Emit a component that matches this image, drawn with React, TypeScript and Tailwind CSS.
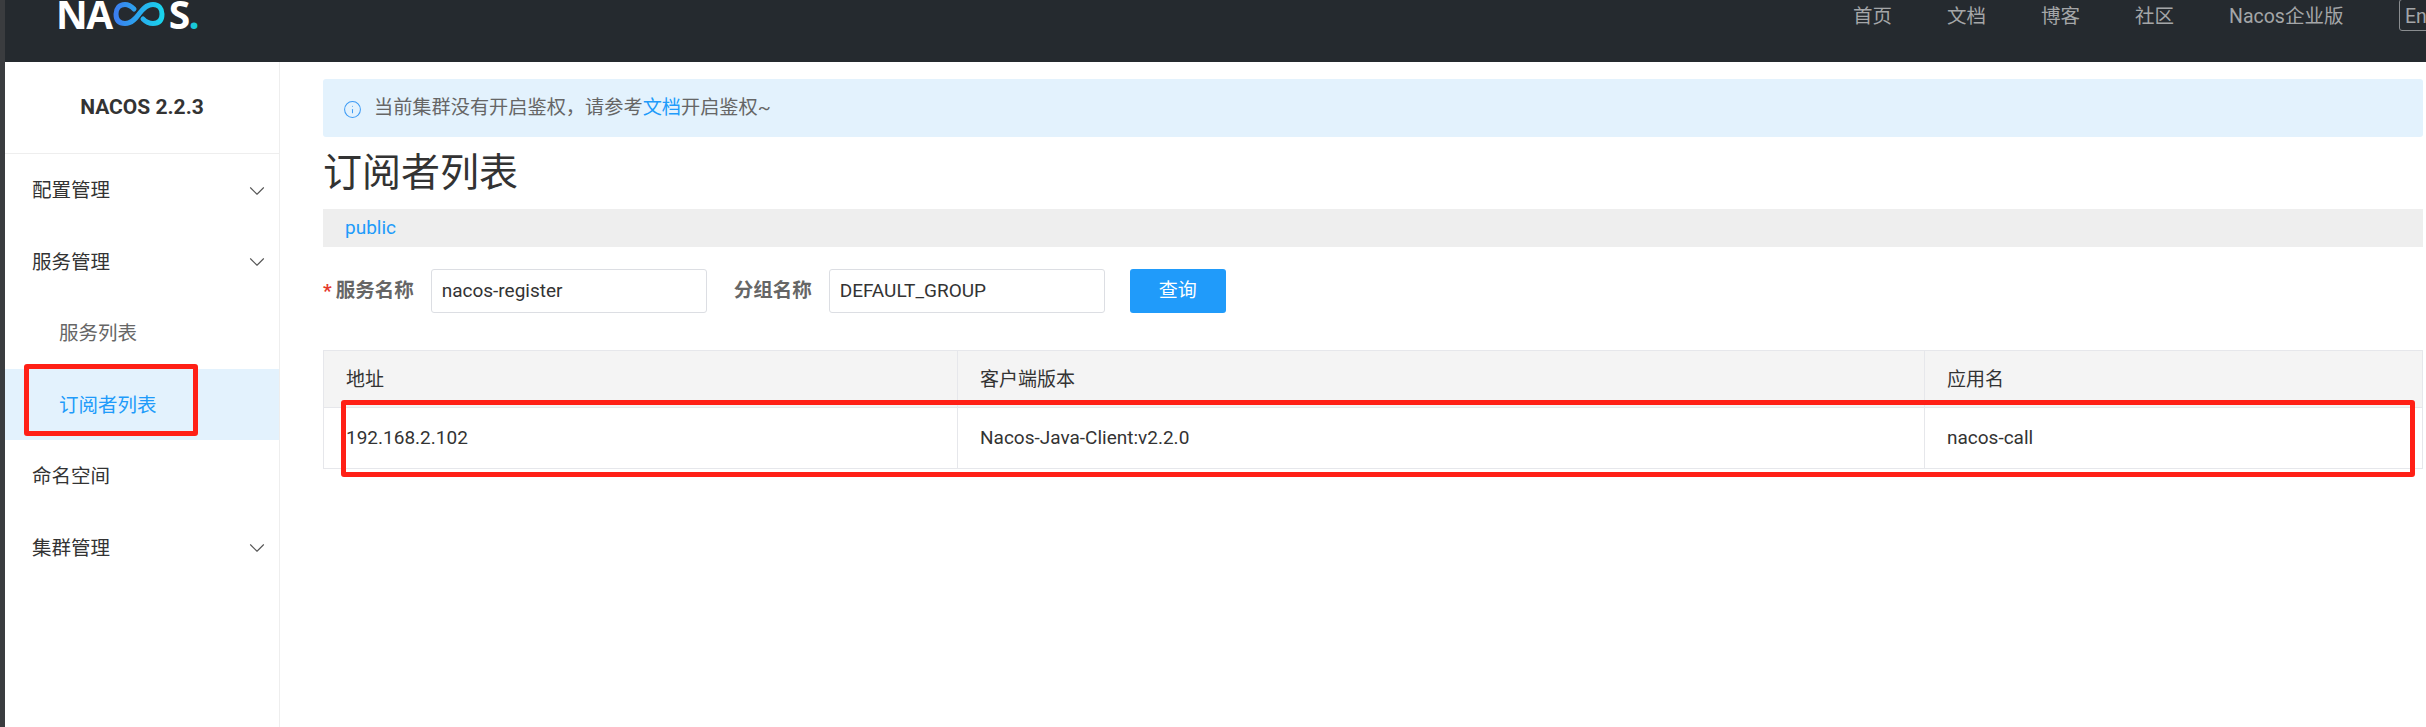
import React from 'react';
import { ChevronDown, Info } from 'lucide-react';

const FONT = "font-['Roboto','Noto_Sans_CJK_SC',sans-serif]";

const topLinks = [
  { label: '首页', width: 'w-[94px]' },
  { label: '文档', width: 'w-[94px]' },
  { label: '博客', width: 'w-[94px]' },
  { label: '社区', width: 'w-[94px]' },
  { label: 'Nacos企业版', width: 'w-[170px]' },
];

const menu = [
  { label: '配置管理', arrow: true },
  { label: '服务管理', arrow: true },
  { label: '服务列表', sub: true },
  { label: '订阅者列表', sub: true, active: true },
  { label: '命名空间' },
  { label: '集群管理', arrow: true },
];

function Logo() {
  return (
    <div className="flex items-start h-[28px] text-white font-['Open_Sans',sans-serif] font-bold text-[39px] leading-[28px] tracking-[-1.500px]">
      <span>NA</span>
      <svg width="52" height="26" viewBox="0 0 52 26" fill="none" className="ml-[1px] mr-[4px]">
        <defs>
          <linearGradient id="nacos-loop" x1="0" y1="0" x2="1" y2="0">
            <stop offset="0" stopColor="#3b7ff0" />
            <stop offset="1" stopColor="#19d3ec" />
          </linearGradient>
        </defs>
        <path
          d="M21 9C18 6 15 4.500 12 4.500C6 4.500 3 9 3 14C3 20 6 23.500 12 23.500C19 23.500 23 18 26 14C29 10 33 4.500 40 4.500C46 4.500 49 9 49 14C49 20 46 23.500 40 23.500C36 23.500 33 22 30 19"
          stroke="url(#nacos-loop)"
          strokeWidth="5"
          strokeLinecap="round"
        />
      </svg>
      <span>S</span>
      <span className="text-[#19c8d8]">.</span>
    </div>
  );
}

function Header() {
  return (
    <header className="h-[62px] shrink-0 bg-[#252a2f] flex items-start justify-between pl-[51px] overflow-hidden">
      <Logo />
      <nav className="flex items-start h-full -mr-[18px]">
        {topLinks.map((link) => (
          <span key={link.label} className={`${link.width} pt-[3px] text-[19.500px] leading-[28px] text-[#a4a6a8]`}>
            {link.label}
          </span>
        ))}
        <span className="w-[45px] h-[32px] -mt-[1px] pl-[5px] border border-[#8a8d90] rounded-[3px] text-[19.500px] leading-[34px] text-[#a4a6a8] overflow-hidden">
          En
        </span>
      </nav>
    </header>
  );
}

function Sidebar() {
  return (
    <aside className="w-[275px] shrink-0 border-r border-[#eeeeee] bg-white">
      <div className="h-[92px] border-b border-[#eeeeee] flex items-center justify-center text-[21px] font-bold text-[#333333]">
        NACOS 2.2.3
      </div>
      <ul>
        {menu.map((item) => (
          <li
            key={item.label}
            className={`h-[71.500px] flex items-center justify-between pr-[9px] pt-[2px] text-[19.500px] ${
              item.sub ? 'pl-[54px]' : 'pl-[27px]'
            } ${item.active ? 'bg-[#e3f2fd] text-[#209bfa]' : item.sub ? 'text-[#666666]' : 'text-[#333333]'}`}
          >
            <span>{item.label}</span>
            {item.arrow && <ChevronDown className="w-[26px] h-[26px] text-[#555555]" strokeWidth={1} />}
          </li>
        ))}
      </ul>
    </aside>
  );
}

function Field({ label, value, required, inputWidth }: { label: string; value: string; required?: boolean; inputWidth: string }) {
  return (
    <div className="flex items-center">
      {required && <span className="text-[#e5392c] text-[19px] font-bold mr-[4px]">*</span>}
      <label className="text-[19.500px] font-bold text-[#666666] mr-[17px]">{label}</label>
      <div className={`${inputWidth} h-[44px] border border-[#dcdee3] rounded-[3px] pl-[10px] flex items-center text-[19px] text-[#333333] bg-white`}>
        {value}
      </div>
    </div>
  );
}

function SubscriberTable() {
  const cell = 'px-[22px] border-r border-[#e6e7eb] flex items-center text-[19px] text-[#333333]';
  return (
    <div className="mt-[37px] border border-[#e6e7eb] grid grid-cols-[634px_967px_1fr] text-[19px]">
      <div className={`${cell} h-[57px] pt-[2px] bg-[#f4f4f4] border-b`}>地址</div>
      <div className={`${cell} h-[57px] pt-[2px] bg-[#f4f4f4] border-b`}>客户端版本</div>
      <div className={`${cell} h-[57px] pt-[2px] bg-[#f4f4f4] border-b border-r-0`}>应用名</div>
      <div className={`${cell} h-[60px]`}>192.168.2.102</div>
      <div className={`${cell} h-[60px]`}>Nacos-Java-Client:v2.2.0</div>
      <div className={`${cell} h-[60px] border-r-0`}>nacos-call</div>
    </div>
  );
}

export default function App() {
  return (
    <div className={`relative w-[2426px] h-[727px] overflow-hidden flex bg-white ${FONT}`}>
      <div className="w-[5px] shrink-0 bg-[#3a3c3f]" />
      <div className="flex-1 min-w-0 flex flex-col">
        <Header />
        <div className="flex-1 flex min-h-0">
          <Sidebar />
          <main className="flex-1 min-w-0 pl-[43px] pr-[3px] pt-[17px]">
            <div className="h-[58px] bg-[#e3f2fd] rounded-[3px] flex items-center pl-[20px] text-[19.200px] text-[#666666]">
              <Info className="w-[19px] h-[19px] text-[#3d9bf5] mr-[12px] mt-[3px]" strokeWidth={1.3} />
              <span>
                当前集群没有开启鉴权，请参考<span className="text-[#209bfa]">文档</span>开启鉴权~
              </span>
            </div>
            <h1 className="h-[72px] flex items-center text-[39px] font-normal text-[#333333]">订阅者列表</h1>
            <div className="h-[38px] bg-[#eeeeee] flex items-center pl-[22px] text-[19px] text-[#209bfa]">public</div>
            <div className="mt-[22px] flex items-center pl-0">
              <Field label="服务名称" value="nacos-register" required inputWidth="w-[276px]" />
              <div className="ml-[27px]">
                <Field label="分组名称" value="DEFAULT_GROUP" inputWidth="w-[276px]" />
              </div>
              <button className="ml-[25px] w-[96px] h-[44px] bg-[#209bfa] rounded-[3px] text-white text-[19px]">查询</button>
            </div>
            <SubscriberTable />
          </main>
        </div>
      </div>
      {/* hand-drawn annotation frames on top of the page */}
      <div className="absolute left-[24px] top-[364px] w-[174px] h-[72px] border-[5px] border-[#ff2016] rounded-[3px]" />
      <div className="absolute left-[341px] top-[400px] w-[2074px] h-[77px] border-[5px] border-[#ff2016] rounded-[3px]" />
    </div>
  );
}
